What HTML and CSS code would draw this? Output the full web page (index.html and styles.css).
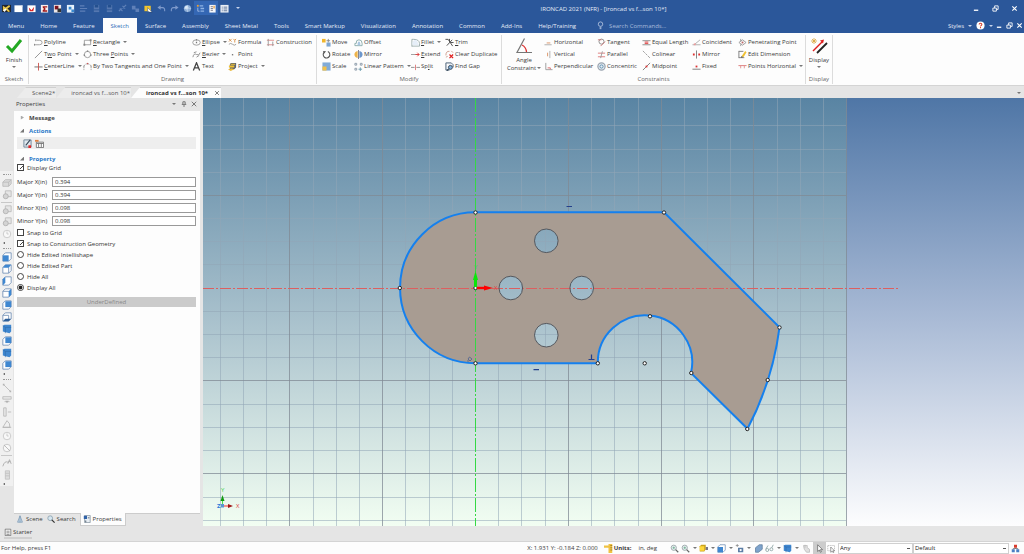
FILE: index.html
```html
<!DOCTYPE html>
<html lang="en">
<head>
<meta charset="utf-8">
<title>IRONCAD 2021 (NFR) - [ironcad vs f...son 10*]</title>
<link rel="stylesheet" href="styles.css">
</head>
<body>
<svg class="defs" aria-hidden="true">
  <defs>
    <symbol id="i-app" viewBox="0 0 10 10"><path d="M0 1h10v8H0z" fill="#20242c"/><path d="M1 2l3 2 4-3 1 2-3 2 3 3-2 1-3-3-3 2z" fill="#e8c64a"/><path d="M1 7l3-2 1 1-2 3z" fill="#fff"/></symbol>
    <symbol id="i-page" viewBox="0 0 10 10"><path d="M0.5 1.500h9v7.500h-9z" fill="#fff"/><path d="M7 1.500h2.500v2z" fill="#c8d4e8"/></symbol>
    <symbol id="i-pagered" viewBox="0 0 10 10"><path d="M0.5 1.500h9v7.500h-9z" fill="#fff"/><path d="M2 4l3 3 3-4-1 5H3z" fill="#d22"/></symbol>
    <symbol id="i-pagesum" viewBox="0 0 10 10"><path d="M1 1h8v8.500H1z" fill="#f6ecec"/><path d="M3 2.500h5v1.500H5l1.500 1.500L5 7h3v1.500H3V7l1.500-1.500L3 4z" fill="#a01818"/></symbol>
    <symbol id="i-pagedark" viewBox="0 0 10 10"><path d="M1 1h8v8.500H1z" fill="#eee6e6"/><path d="M2 2h4v4H2z" fill="#7c1420"/><path d="M5 5h4v4H5z" fill="#333"/></symbol>
    <symbol id="i-pageblue" viewBox="0 0 10 10"><path d="M1 1h8v8.500H1z" fill="#e8f2fc"/><path d="M3 3h3v3H3zM6 6h3v3H6z" fill="#3b8ad0"/></symbol>
    <symbol id="i-open" viewBox="0 0 10 10"><path d="M1 2h5M1 5h8M1 8h6" stroke="#5f80b8" stroke-width="1.300"/></symbol>
    <symbol id="i-save" viewBox="0 0 10 10"><path d="M2 1h6v8H2z" fill="#5577b0"/><path d="M3 1h4v3H3zM2 6h6v1H2z" fill="#24508f"/></symbol>
    <symbol id="i-link" viewBox="0 0 10 10"><path d="M1 8l3-3M5 5l4-4M2 5l3 3M5 2l3 3" stroke="#5f80b8" stroke-width="1.300" fill="none"/></symbol>
    <symbol id="i-puzzle" viewBox="0 0 10 10"><path d="M1 2h4v4H1zM5 5h4v4H5z" fill="#5f80b8"/></symbol>
    <symbol id="i-pick" viewBox="0 0 10 10"><path d="M0.500 2h7v6h-7z" fill="#f2c52e"/><path d="M4 4l5 5H6L4 8z" fill="#fff" stroke="#345" stroke-width=".5"/></symbol>
    <symbol id="i-undo" viewBox="0 0 10 10"><path d="M2 4h4q3 0 2.500 4" stroke="#7e9acb" stroke-width="1.200" fill="none"/><path d="M0.500 4L4 1.500v5z" fill="#7e9acb"/></symbol>
    <symbol id="i-redo" viewBox="0 0 10 10"><path d="M8 4H4q-3 0-2.500 4" stroke="#7e9acb" stroke-width="1.200" fill="none"/><path d="M9.500 4L6 1.500v5z" fill="#7e9acb"/></symbol>
    <symbol id="i-globe" viewBox="0 0 10 10"><circle cx="5" cy="5" r="4" fill="#8fb0d8"/><circle cx="4" cy="4" r="2" fill="#d9e8f6"/><path d="M5 1v8M1 5h8" stroke="#c6d8ee" stroke-width=".6"/></symbol>
    <symbol id="i-tree" viewBox="0 0 10 10"><path d="M1 1h2v2H1z" fill="#f0a030"/><path d="M4 2h4M5 5h4M5 8h4" stroke="#8fb4e4" stroke-width="1.400"/><path d="M2 4v4h2" stroke="#bcd0ee" fill="none" stroke-width=".8"/></symbol>
    <symbol id="i-prop" viewBox="0 0 10 10"><path d="M1.500 1h7v8.500h-7z" fill="#f4f6fa"/><path d="M3 3h2.500M3 5h2.500M3 7h2.500" stroke="#556" stroke-width=".8"/><path d="M6 2h1.500v3H6z" fill="#e8a040"/></symbol>
    <symbol id="i-list" viewBox="0 0 10 10"><path d="M.5 1h9v8.500h-9z" fill="#e9eef6"/><path d="M2 3.500h6M2 5.500h6M2 7.500h6" stroke="#33507c" stroke-width=".8" stroke-dasharray="1 1 4"/></symbol>

    <symbol id="i-polyline" viewBox="0 0 10 10"><path d="M1 7.500h5q3 0 3-2.500T6 2.500H3" stroke="#9a9a9a" fill="none"/><path d="M2 1.500v2M0.500 6.500v2" stroke="#777"/></symbol>
    <symbol id="i-line" viewBox="0 0 10 10"><path d="M1 9L9 1" stroke="#8c8c8c"/></symbol>
    <symbol id="i-center" viewBox="0 0 10 10"><path d="M0.500 5.500h9" stroke="#666"/><path d="M5 1v8.500" stroke="#c9504a"/></symbol>
    <symbol id="i-rect" viewBox="0 0 10 10"><path d="M1.500 2.500h7v5h-7z" stroke="#9a9a9a" fill="none"/><path d="M0.500 6.500h2v2h-2zM7.500 1.500h2v2h-2z" fill="#888"/></symbol>
    <symbol id="i-circle" viewBox="0 0 10 10"><circle cx="5" cy="5" r="3.500" stroke="#9a9a9a" fill="none"/><path d="M4.300.5h1.500V2H4.300zM.7 5h1.500v1.500H.7zM8 5h1.500v1.500H8z" fill="#777"/></symbol>
    <symbol id="i-tang" viewBox="0 0 10 10"><path d="M1 4v5M9 4v5M1 5q1-3 4-3t4 3" stroke="#999" fill="none" stroke-dasharray="3 1"/><path d="M4.300 1h1.500v1.500H4.300z" fill="#c55"/></symbol>
    <symbol id="i-ellipse" viewBox="0 0 10 10"><ellipse cx="5" cy="5" rx="4.200" ry="3" stroke="#999" fill="none"/><path d="M4.300 4.300h1.400v1.400H4.300zM4.300 1.300h1.400v1.400H4.300z" fill="#777"/></symbol>
    <symbol id="i-bezier" viewBox="0 0 10 10"><path d="M1 8q1-5 4-3t4-2M2 3l3-1M5 8l3-2" stroke="#888" fill="none"/></symbol>
    <symbol id="i-text" viewBox="0 0 10 10"><path d="M1.500 9.500L5 .8l3.500 8.700M2.800 6.500h4.400" stroke="#444" stroke-width="1.400" fill="none"/></symbol>
    <symbol id="i-formula" viewBox="0 0 10 10"><path d="M1 1l3 3M4 1L1 4M6 1l1.500 1.500V5M9 1L7.500 2.500" stroke="#d8924a" fill="none"/><path d="M1 7q2-2 4 0t4 0" stroke="#999" fill="none"/></symbol>
    <symbol id="i-point" viewBox="0 0 10 10"><path d="M4.300 4.500h1.500V6H4.300z" fill="#777"/></symbol>
    <symbol id="i-project" viewBox="0 0 10 10"><path d="M3 1h6v5L7 8H2V3z" fill="#5a6270"/><path d="M1 4h6v2H1zM3 2h5v1H3z" fill="#f1c232"/><path d="M0 8l4-1 3 1-4 2z" fill="#e8b93c"/></symbol>
    <symbol id="i-constr" viewBox="0 0 10 10"><path d="M1 2.500h8M1 7.500h8" stroke="#d88"/><path d="M2.500 1v8M7.500 4v5" stroke="#999"/></symbol>

    <symbol id="i-move" viewBox="0 0 10 10"><path d="M0 1h4v4H0z" fill="#f1b62c"/><path d="M5 3h4M7 1v4" stroke="#888"/><path d="M5 5h4.500v4.500H5z" fill="#7fa6d2"/></symbol>
    <symbol id="i-rotate" viewBox="0 0 10 10"><path d="M6.500 1.800A3.700 3.700 0 1 1 2.500 2.500" stroke="#555" stroke-width="1.200" fill="none"/><path d="M1 1l3.500.5L2.500 4z" fill="#555"/></symbol>
    <symbol id="i-scale" viewBox="0 0 10 10"><path d="M.5.5h9v9h-9z" fill="#82acd8"/><path d="M.5 5h4.500v4.500H.5z" fill="#f2c14a"/></symbol>
    <symbol id="i-offset" viewBox="0 0 10 10"><path d="M1 8.500h8V6Q9 2 5.500 2T2.500 6H1z" stroke="#8aa" fill="none"/><path d="M4 8V6q.2-2 1.500-2T7 6v2z" fill="#a9c6e2"/></symbol>
    <symbol id="i-mirror" viewBox="0 0 10 10"><path d="M4 1v8Q.5 8 .5 5T4 1z" fill="#eeb44a"/><path d="M6 1v8q3.500-1 3.500-4T6 1z" fill="#6d97cc"/><path d="M5 0v10" stroke="#556" stroke-width=".8"/></symbol>
    <symbol id="i-pattern" viewBox="0 0 10 10"><path d="M1 1.500h2v2H1zM7 1.500h2v2H7zM1 7h2v2H1z" fill="none" stroke="#8a98a8"/><path d="M5 8h4M7 6v4" stroke="#69a"/></symbol>
    <symbol id="i-fillet" viewBox="0 0 10 10"><path d="M1 9.500V1.500M1 9h8.500V6Q9 1.500 3 1.500H1" stroke="#9aa" fill="none"/><path d="M1.500 6Q2 2 6 2l3 6H2z" fill="#e6eef8"/></symbol>
    <symbol id="i-extend" viewBox="0 0 10 10"><path d="M0 5h6" stroke="#999"/><path d="M5 5h4M7 3l2 2-2 2" stroke="#d33" fill="none"/></symbol>
    <symbol id="i-split" viewBox="0 0 10 10"><path d="M0 6h4M6 6h4" stroke="#888"/><path d="M5 3v6" stroke="#d77"/></symbol>
    <symbol id="i-trim" viewBox="0 0 10 10"><path d="M.5 1.500h3L8.500 9M2 8.500L8 2M5 1v3M6 5h3.500" stroke="#444" fill="none"/></symbol>
    <symbol id="i-clear" viewBox="0 0 10 10"><path d="M1 6Q1 1 5 1.500M7 1l2 2M1 8l2-1" stroke="#c98" fill="none"/><path d="M5 5l4 4M9 5L5 9" stroke="#e02020" stroke-width="1.400"/></symbol>
    <symbol id="i-gap" viewBox="0 0 10 10"><path d="M1 1h6l2 2v3M1 1v8h4" fill="#eef3f8" stroke="#445a70"/><circle cx="6" cy="6" r="2.200" fill="#7fb0dc" stroke="#345"/><path d="M4 8L2 9.500" stroke="#345" stroke-width="1.400"/></symbol>

    <symbol id="i-horiz" viewBox="0 0 10 10"><path d="M.5 7.500h8" stroke="#aaa"/><path d="M3 5.500h4" stroke="#d99060"/></symbol>
    <symbol id="i-vert" viewBox="0 0 10 10"><path d="M6.500 1v8" stroke="#aaa"/><path d="M4 3v4" stroke="#d99060"/></symbol>
    <symbol id="i-perp" viewBox="0 0 10 10"><path d="M2 1v7.500h7.500" stroke="#999" fill="none"/><path d="M4 6.500h3V8" stroke="#d66" fill="none"/></symbol>
    <symbol id="i-tangent" viewBox="0 0 10 10"><circle cx="5" cy="4" r="2.800" stroke="#888" fill="none"/><path d="M1 2h4M4 9l5-5" stroke="#c77"/></symbol>
    <symbol id="i-parallel" viewBox="0 0 10 10"><path d="M1 3.500h8M1 7.500h8" stroke="#d77"/><path d="M6 1.500L4 9" stroke="#999"/></symbol>
    <symbol id="i-conc" viewBox="0 0 10 10"><circle cx="5" cy="5" r="4" stroke="#9aa4b0" stroke-width="1.400" fill="#e8eef4"/><circle cx="5" cy="5" r="1.800" stroke="#58a" fill="none"/></symbol>
    <symbol id="i-equal" viewBox="0 0 10 10"><path d="M.5 3h9M.5 7.500h9" stroke="#888"/><path d="M3 4.500h4M3 6h4" stroke="#d33"/></symbol>
    <symbol id="i-colin" viewBox="0 0 10 10"><path d="M1 1l8 8" stroke="#999" stroke-dasharray="3 1"/></symbol>
    <symbol id="i-mid" viewBox="0 0 10 10"><path d="M1 9L9 1" stroke="#777"/><path d="M4 4h2v2H4z" fill="#d33"/></symbol>
    <symbol id="i-coin" viewBox="0 0 10 10"><path d="M.5 7.500h9M3 7L9 2" stroke="#aaa"/><path d="M2 6h2v2H2z" fill="#e99"/></symbol>
    <symbol id="i-cmirror" viewBox="0 0 10 10"><path d="M5 .5v9" stroke="#777"/><path d="M1 4h2v2H1zM7 4h2v2H7z" fill="#d33"/></symbol>
    <symbol id="i-fixed" viewBox="0 0 10 10"><path d="M.5 8h9" stroke="#777"/><path d="M4 4h2v2H4z" fill="#d33"/></symbol>
    <symbol id="i-pen" viewBox="0 0 10 10"><path d="M1 5l4-3 4 3-4 3zM3 1v3M3 7v2" stroke="#999" fill="none"/><path d="M4 4h2v2H4z" fill="#b66"/></symbol>
    <symbol id="i-edit" viewBox="0 0 10 10"><path d="M1 1v8M1 8.500h6M1 1.500h5" stroke="#777" fill="none"/><path d="M4 7L8 1l1.500 1.500L6 8z" fill="#f0c030"/><path d="M3.500 8.500L4 6.500 5.500 8z" fill="#444"/></symbol>
    <symbol id="i-ph" viewBox="0 0 10 10"><path d="M.5 4h9" stroke="#d77"/><path d="M3 4v3M7 4v3" stroke="#e09090"/></symbol>

    <symbol id="i-cfront" viewBox="0 0 12 12"><path d="M1 4l3-3h7v7l-3 3H1z" fill="#fff" stroke="#6d8db4"/><path d="M1 4h7v7H1z" fill="#3f87d0"/></symbol>
    <symbol id="i-ctop" viewBox="0 0 12 12"><path d="M1 4l3-3h7v7l-3 3H1zM8 4v7" fill="#fff" stroke="#6d8db4"/><path d="M1 4.500l3-3.500h7L8 4.500z" fill="#3f87d0"/></symbol>
    <symbol id="i-cleft" viewBox="0 0 12 12"><path d="M1 4l3-3h7v7l-3 3H1z" fill="#fff" stroke="#6d8db4"/><path d="M1 4l3-3v7l-3 3z" fill="#3f87d0"/></symbol>
    <symbol id="i-cright" viewBox="0 0 12 12"><path d="M1 4l3-3h7v7l-3 3H1zM1 4h7" fill="#fff" stroke="#6d8db4"/><path d="M8 4l3-3v7l-3 3z" fill="#3f87d0"/></symbol>
    <symbol id="i-cback" viewBox="0 0 12 12"><path d="M1 4l3-3h7v7l-3 3H1z" fill="#fff" stroke="#6d8db4"/><path d="M4 1.500h7v7H4z" fill="#3f87d0"/></symbol>
    <symbol id="i-cbottom" viewBox="0 0 12 12"><path d="M1 4l3-3h7v7l-3 3H1zM1 4h7V9" fill="#fff" stroke="#6d8db4"/><path d="M1 11l3-3h7l-3 3z" fill="#2d5f99"/></symbol>
    <symbol id="i-cfull" viewBox="0 0 12 12"><path d="M1 2l2-1h8v8l-2 2-8-2z" fill="#3f87d0"/><path d="M1 2l3 2h7M4 4v7" stroke="#2f69a8" fill="none" stroke-width=".8"/></symbol>

    <symbol id="g-solid" viewBox="0 0 12 12"><path d="M1 5l3-3h7v5l-3 3H1zM1 5h7v5M8 5l3-3" fill="#dadada" stroke="#b9b9b9"/></symbol>
    <symbol id="g-bool" viewBox="0 0 12 12"><path d="M4 1h7v7H4z" fill="#e6e6e6" stroke="#b9b9b9"/><circle cx="4.500" cy="7.500" r="3" fill="#d4d4d4" stroke="#b0b0b0"/></symbol>
    <symbol id="g-ring" viewBox="0 0 12 12"><circle cx="6" cy="6" r="4.500" fill="#f8f8f8" stroke="#c4c4c4"/><path d="M6 3v3h2" stroke="#c4c4c4" fill="none"/></symbol>
    <symbol id="g-no" viewBox="0 0 12 12"><circle cx="6" cy="6" r="4.500" fill="#f8f8f8" stroke="#c0c0c0"/><path d="M2.500 2.500l7 7" stroke="#b0b0b0"/></symbol>
    <symbol id="g-line" viewBox="0 0 12 12"><path d="M2 2l8 8" stroke="#b4b4b4"/><path d="M1 1h2v2H1zM9 9h2v2H9z" fill="#b4b4b4"/></symbol>
    <symbol id="g-hdim" viewBox="0 0 12 12"><path d="M1 2h10v3H1zM3 8h6" fill="#e8e8e8" stroke="#b8b8b8"/><path d="M4 7h4L6 10z" fill="#b0b0b0"/></symbol>
    <symbol id="g-vdim" viewBox="0 0 12 12"><path d="M2 1h3v10H2zM7 6h4" fill="#e8e8e8" stroke="#b8b8b8"/></symbol>
    <symbol id="g-ang" viewBox="0 0 12 12"><path d="M1 10L6 2q4 3 3.500 8zM1 10h10" fill="none" stroke="#b4b4b4"/></symbol>
    <symbol id="g-spl" viewBox="0 0 12 12"><path d="M1 10Q3 3 7 5l3-1M7 7l2-5 2 5" fill="none" stroke="#a8a8a8"/></symbol>
    <symbol id="g-bar" viewBox="0 0 12 12"><path d="M4 1h5v10H4zM4 4h5M4 7h5" fill="#ddd" stroke="#c0c0c0"/></symbol>

    <symbol id="s-zoom" viewBox="0 0 12 12"><circle cx="5" cy="5" r="3.500" fill="#e6eef0" stroke="#8c9a9c"/><path d="M3.500 5h3M5 3.500v3" stroke="#6a8"/><path d="M7.500 7.500L11 11" stroke="#666" stroke-width="1.600"/></symbol>
    <symbol id="s-yel" viewBox="0 0 12 12"><path d="M1 3l2-2h6v6L7 10H1z" fill="#caa21c"/><path d="M1 3h6v6H1z" fill="#ffd83a"/><path d="M9 4h3v4H9z" fill="#778"/></symbol>
    <symbol id="s-cam" viewBox="0 0 12 12"><path d="M4 5h7v6H4z" fill="#5c7ea6"/><path d="M1 2h4M3 0v4" stroke="#888"/><circle cx="7.500" cy="8" r="1.500" fill="#fff"/></symbol>
    <symbol id="s-plane" viewBox="0 0 12 12"><path d="M2 5l5-4h4v6l-5 4H2z" fill="#7ea3cc" stroke="#5f7d9e"/></symbol>
    <symbol id="s-glass" viewBox="0 0 12 12"><circle cx="3" cy="8" r="2" fill="none" stroke="#7f9a9a"/><circle cx="8.500" cy="7" r="2" fill="none" stroke="#7f9a9a"/><path d="M1 7l3-5M9 5l2-4" stroke="#7f9a9a"/></symbol>
    <symbol id="s-hand" viewBox="0 0 12 12"><path d="M2 2h5v3l3 2v4H6L3 7zM4 1v4" fill="#e0e0e0" stroke="#b8b8b8"/></symbol>
    <symbol id="s-arrow" viewBox="0 0 12 12"><path d="M3.500 1v9l2.200-2 1.500 3 1.300-.6L7.200 7.500H10z" fill="#fff" stroke="#555" stroke-width=".9"/></symbol>
    <symbol id="s-box" viewBox="0 0 12 12"><path d="M1 2h9v7H1z" fill="none" stroke="#aaa" stroke-dasharray="1.500 1"/><path d="M5 4v7l2-1.500 1 2 1-.5-1-2h2z" fill="#fff" stroke="#666" stroke-width=".8"/></symbol>
    <symbol id="s-org" viewBox="0 0 12 12"><path d="M4 1h4v4H4z" fill="#d93a2c"/><path d="M1 7h4v4H1zM7 7h4v4H7z" fill="#4a7fc4"/><path d="M6 5v1M3 7V6h6v1" stroke="#666" fill="none"/></symbol>
    <symbol id="s-rule" viewBox="0 0 12 12"><path d="M6 0h5v12H6zM0 2h6v3H0z" fill="#f0c243"/><path d="M8.500 2H11M8.500 5H11M8.500 8H11" stroke="#7a5c10" stroke-width=".8"/></symbol>

    <symbol id="w-min" viewBox="0 0 8 8"><path d="M1 6h5" stroke="#fff" stroke-width="1.500"/></symbol>
    <symbol id="w-res" viewBox="0 0 8 8"><path d="M1 3.500h4v3.500H1zM3 3.500V1h4v4H5" stroke="#fff" fill="none"/></symbol>
    <symbol id="w-x" viewBox="0 0 8 8"><path d="M1.500 1.500l5 5M6.500 1.500l-5 5" stroke="#fff" stroke-width="1.300"/></symbol>
  </defs>
</svg>

<div class="app">
  <header class="titlebar">
    <div class="qat">
      <button aria-label="Application"><svg><use href="#i-app"/></svg></button>
      <button aria-label="New"><svg><use href="#i-page"/></svg></button>
      <button aria-label="New scene"><svg><use href="#i-pagered"/></svg></button>
      <button aria-label="New drawing"><svg><use href="#i-pagesum"/></svg></button>
      <button aria-label="Templates"><svg><use href="#i-pagedark"/></svg></button>
      <button aria-label="Import"><svg><use href="#i-pageblue"/></svg></button>
      <button aria-label="Open"><svg><use href="#i-open"/></svg></button>
      <button aria-label="Save"><svg><use href="#i-save"/></svg></button>
      <button aria-label="Save as"><svg><use href="#i-save"/></svg></button>
      <button aria-label="Link"><svg><use href="#i-link"/></svg></button>
      <button aria-label="Insert part"><svg><use href="#i-puzzle"/></svg></button>
      <button aria-label="Select"><svg><use href="#i-pick"/></svg></button>
      <button aria-label="Undo"><svg><use href="#i-undo"/></svg></button>
      <button aria-label="Redo"><svg><use href="#i-redo"/></svg></button>
      <button aria-label="Web"><svg><use href="#i-globe"/></svg></button>
      <button class="on" aria-label="Scene tree"><svg><use href="#i-tree"/></svg></button>
      <button class="on" aria-label="Property panel"><svg><use href="#i-prop"/></svg></button>
      <button aria-label="List"><svg><use href="#i-list"/></svg></button>
      <button class="caret light" aria-label="Customize toolbar"></button>
    </div>
    <h1>IRONCAD 2021 (NFR) - [ironcad vs f...son 10*]</h1>
    <div class="winctl">
      <button aria-label="Minimize"><svg><use href="#w-min"/></svg></button>
      <button aria-label="Restore"><svg><use href="#w-res"/></svg></button>
      <button aria-label="Close"><svg><use href="#w-x"/></svg></button>
    </div>
  </header>

  <nav class="menubar">
    <button>Menu</button><button>Home</button><button>Feature</button><button class="active">Sketch</button><button>Surface</button><button>Assembly</button><button>Sheet Metal</button><button>Tools</button><button>Smart Markup</button><button>Visualization</button><button>Annotation</button><button>Common</button><button>Add-Ins</button><button>Help/Training</button>
    <label class="search"><svg viewBox="0 0 8 10"><circle cx="4" cy="3.500" r="2.500" fill="none" stroke="#b9c8e2" stroke-width=".9"/><path d="M3 7h2M3 8.500h2" stroke="#b9c8e2"/></svg><input type="text" placeholder="Search Commands..." aria-label="Search Commands"></label>
    <div class="docctl">
      <button class="styles">Styles<i class="caret light"></i></button>
      <button class="help" aria-label="Help"><svg viewBox="0 0 10 10"><circle cx="5" cy="5" r="4.500" fill="#fff"/><path d="M3.500 3.800Q3.500 2.500 5 2.500t1.500 1.300Q6.500 4.600 5 5.500M5 6.500V8" stroke="#d8402c" stroke-width="1.200" fill="none"/></svg><i class="caret light"></i></button>
      <button aria-label="Minimize document"><svg><use href="#w-min"/></svg></button>
      <button aria-label="Restore document"><svg><use href="#w-res"/></svg></button>
      <button aria-label="Close document"><svg><use href="#w-x"/></svg></button>
    </div>
  </nav>

  <div class="ribbon">
    <section class="group">
      <div class="tools finish">
        <button class="big"><svg viewBox="0 0 18 18"><path d="M2 9l5 5L16 3" stroke="#22a822" stroke-width="3" fill="none"/></svg>Finish<i class="caret"></i></button>
      </div>
      <h2>Sketch</h2>
    </section>
    <section class="group">
      <div class="tools drawing">
        <div>
          <button><svg><use href="#i-polyline"/></svg><span><u>P</u>olyline</span></button>
          <button><svg><use href="#i-line"/></svg><span>T<u>w</u>o Point</span><i class="caret"></i></button>
          <button><svg><use href="#i-center"/></svg><span><u>C</u>enterLine</span><i class="caret"></i></button>
        </div>
        <div>
          <button><svg><use href="#i-rect"/></svg><span><u>R</u>ectangle</span><i class="caret"></i></button>
          <button><svg><use href="#i-circle"/></svg><span>Three <u>P</u>oints</span><i class="caret"></i></button>
          <button><svg><use href="#i-tang"/></svg><span>By Two Tangents and One Point</span><i class="caret"></i></button>
        </div>
        <div>
          <button><svg><use href="#i-ellipse"/></svg><span><u>E</u>llipse</span><i class="caret"></i></button>
          <button><svg><use href="#i-bezier"/></svg><span><u>B</u>ezier</span><i class="caret"></i></button>
          <button><svg><use href="#i-text"/></svg><span>Text</span></button>
        </div>
        <div>
          <button><svg><use href="#i-formula"/></svg><span>Formula</span></button>
          <button><svg><use href="#i-point"/></svg><span>Point</span></button>
          <button><svg><use href="#i-project"/></svg><span>Project</span><i class="caret"></i></button>
        </div>
        <div>
          <button><svg><use href="#i-constr"/></svg><span>Construction</span></button>
        </div>
      </div>
      <h2>Drawing</h2>
    </section>
    <section class="group">
      <div class="tools modify">
        <div>
          <button><svg><use href="#i-move"/></svg><span>Move</span></button>
          <button><svg><use href="#i-rotate"/></svg><span>Rotate</span></button>
          <button><svg><use href="#i-scale"/></svg><span>Scale</span></button>
        </div>
        <div>
          <button><svg><use href="#i-offset"/></svg><span>Offset</span></button>
          <button><svg><use href="#i-mirror"/></svg><span>Mirror</span></button>
          <button><svg><use href="#i-pattern"/></svg><span>Linear Pattern</span><i class="caret"></i></button>
        </div>
        <div>
          <button><svg><use href="#i-fillet"/></svg><span><u>F</u>illet</span><i class="caret"></i></button>
          <button><svg><use href="#i-extend"/></svg><span><u>E</u>xtend</span></button>
          <button><svg><use href="#i-split"/></svg><span>Sp<u>l</u>it</span></button>
        </div>
        <div>
          <button><svg><use href="#i-trim"/></svg><span><u>T</u>rim</span></button>
          <button><svg><use href="#i-clear"/></svg><span>Clear Duplicate</span></button>
          <button><svg><use href="#i-gap"/></svg><span>Find Gap</span></button>
        </div>
      </div>
      <h2>Modify</h2>
    </section>
    <section class="group">
      <div class="tools constraints">
        <button class="big"><svg viewBox="0 0 18 18"><path d="M9.500 1.500L2 15.500h15" stroke="#777" stroke-width="1.200" fill="none"/><path d="M7 8q4 2 4.500 7" stroke="#d33" stroke-width="1.300" fill="none"/></svg>Angle<span>Constraint<i class="caret"></i></span></button>
        <div>
          <button><svg><use href="#i-horiz"/></svg><span>Horizontal</span></button>
          <button><svg><use href="#i-vert"/></svg><span>Vertical</span></button>
          <button><svg><use href="#i-perp"/></svg><span>Perpendicular</span></button>
        </div>
        <div>
          <button><svg><use href="#i-tangent"/></svg><span>Tangent</span></button>
          <button><svg><use href="#i-parallel"/></svg><span>Parallel</span></button>
          <button><svg><use href="#i-conc"/></svg><span>Concentric</span></button>
        </div>
        <div>
          <button><svg><use href="#i-equal"/></svg><span>Equal Length</span></button>
          <button><svg><use href="#i-colin"/></svg><span>Colinear</span></button>
          <button><svg><use href="#i-mid"/></svg><span>Midpoint</span></button>
        </div>
        <div>
          <button><svg><use href="#i-coin"/></svg><span>Coincident</span></button>
          <button><svg><use href="#i-cmirror"/></svg><span>Mirror</span></button>
          <button><svg><use href="#i-fixed"/></svg><span>Fixed</span></button>
        </div>
        <div>
          <button><svg><use href="#i-pen"/></svg><span>Penetrating Point</span></button>
          <button><svg><use href="#i-edit"/></svg><span>Edit Dimension</span></button>
          <button><svg><use href="#i-ph"/></svg><span>Points Horizontal</span><i class="caret"></i></button>
        </div>
      </div>
      <h2>Constraints</h2>
    </section>
    <section class="group">
      <div class="tools display">
        <button class="big"><svg viewBox="0 0 18 18"><path d="M3 14L12 5" stroke="#e02020" stroke-width="1.500"/><path d="M14 2.500l-4 1 3 3z" fill="#e02020"/><path d="M7 16L17 6" stroke="#222" stroke-width="1.800"/><path d="M4 1v6M1 4h6M2 2l4 4M6 2L2 6" stroke="#d9a43c" stroke-width=".8"/></svg>Display<i class="caret"></i></button>
      </div>
      <h2>Display</h2>
    </section>
  </div>

  <div class="doctabs" role="tablist">
    <button role="tab">Scene2*</button>
    <button role="tab">ironcad vs f...son 10*</button>
    <button role="tab" class="active" aria-selected="true">ironcad vs f...son 10*<svg viewBox="0 0 8 8"><path d="M1.500 1.500l5 5M6.500 1.500l-5 5" stroke="#555"/></svg></button>
    <button class="caret more" aria-label="Tab list"></button>
  </div>

  <main>
    <aside class="strip">
      <hr class="grip">
      <button aria-label="Solid"><svg><use href="#g-solid"/></svg></button>
      <button aria-label="Shell"><svg><use href="#g-bool"/></svg></button>
      <hr>
      <button aria-label="Union"><svg><use href="#g-bool"/></svg></button>
      <button aria-label="Subtract"><svg><use href="#g-bool"/></svg></button>
      <button aria-label="Intersect"><svg><use href="#g-ring"/></svg></button>
      <button class="more" aria-label="More solid tools"></button>
      <hr class="grip">
      <button aria-label="Front"><svg><use href="#i-cfront"/></svg></button>
      <button aria-label="Top"><svg><use href="#i-ctop"/></svg></button>
      <button aria-label="Left"><svg><use href="#i-cleft"/></svg></button>
      <button aria-label="Right"><svg><use href="#i-cright"/></svg></button>
      <button aria-label="Back"><svg><use href="#i-cback"/></svg></button>
      <button aria-label="Bottom"><svg><use href="#i-cbottom"/></svg></button>
      <button aria-label="Isometric 1"><svg><use href="#i-cfull"/></svg></button>
      <button aria-label="Isometric 2"><svg><use href="#i-cback"/></svg></button>
      <button aria-label="Isometric 3"><svg><use href="#i-cfull"/></svg></button>
      <button aria-label="Isometric 4"><svg><use href="#i-cback"/></svg></button>
      <button class="more" aria-label="More views"></button>
      <hr class="grip">
      <button aria-label="Smart dimension"><svg><use href="#g-line"/></svg></button>
      <button aria-label="Horizontal dimension"><svg><use href="#g-hdim"/></svg></button>
      <button aria-label="Vertical dimension"><svg><use href="#g-vdim"/></svg></button>
      <button aria-label="Angle dimension"><svg><use href="#g-ang"/></svg></button>
      <button aria-label="Radius dimension"><svg><use href="#g-ring"/></svg></button>
      <button aria-label="Diameter dimension"><svg><use href="#g-no"/></svg></button>
      <hr>
      <button aria-label="Leader"><svg><use href="#g-spl"/></svg></button>
      <button aria-label="Symbol"><svg><use href="#g-bar"/></svg></button>
      <button class="more" aria-label="More dimensions"></button>
    </aside>

    <div class="dock">
      <div class="dockhead"><span>Properties</span>
        <button class="caret" aria-label="Panel menu"></button>
        <button aria-label="Pin"><svg viewBox="0 0 8 8"><path d="M2.500 1h3v3.500M2.500 1v3.500M1 4.500h6M4 5v3" stroke="#555" fill="none"/></svg></button>
        <button aria-label="Close panel"><svg viewBox="0 0 8 8"><path d="M1 1l6 6M7 1L1 7" stroke="#555"/></svg></button>
      </div>
      <form class="panel">
        <h3 class="closed">Message</h3>
        <h3>Actions</h3>
        <div class="actions">
          <button type="button" aria-label="Edit sketch"><svg viewBox="0 0 10 10"><path d="M1 1h8v8H1z" fill="#dfe8ee" stroke="#6d8296"/><path d="M3 7L8 1" stroke="#345" stroke-width="1.200"/><path d="M6 7h3v3H6z" fill="#e02828"/></svg></button>
          <button type="button" aria-label="Sketch options"><svg viewBox="0 0 10 10"><path d="M1.500 3.500h8v6h-8zM4 5v4M7 5v4M2 5h7" stroke="#666" fill="#fff" stroke-width=".9"/><path d="M0 1h4v2H0z" fill="#e08040"/></svg></button>
        </div>
        <h3>Property</h3>
        <label class="opt"><input type="checkbox" checked>Display Grid</label>
        <div class="fields">
          <label for="majx">Major X(in)</label><input id="majx" type="text" value="0.394">
          <label for="majy">Major Y(in)</label><input id="majy" type="text" value="0.394">
          <label for="minx">Minor X(in)</label><input id="minx" type="text" value="0.098">
          <label for="miny">Minor Y(in)</label><input id="miny" type="text" value="0.098">
        </div>
        <label class="opt"><input type="checkbox">Snap to Grid</label>
        <label class="opt"><input type="checkbox" checked>Snap to Construction Geometry</label>
        <label class="opt"><input type="radio" name="vis">Hide Edited Intellishape</label>
        <label class="opt"><input type="radio" name="vis">Hide Edited Part</label>
        <label class="opt"><input type="radio" name="vis">Hide All</label>
        <label class="opt"><input type="radio" name="vis" checked>Display All</label>
        <button type="button" class="state" disabled>UnderDefined</button>
      </form>
      <div class="docktabs" role="tablist">
        <button role="tab"><svg viewBox="0 0 10 10"><path d="M5 1L2 9h6zM5 1v8" stroke="#7f9cb8" fill="#c8dae8"/></svg>Scene</button>
        <button role="tab"><svg viewBox="0 0 10 10"><circle cx="4" cy="4" r="3" fill="#d5e6f0" stroke="#8aa0ac"/><path d="M6 6l3.500 3.500" stroke="#333" stroke-width="1.500"/></svg>Search</button>
        <button role="tab" class="active"><svg viewBox="0 0 10 10"><path d="M2 .5h7v9H2z" fill="#e8eef4" stroke="#8895a2"/><path d="M1 1h4v4H1z" fill="#2f62a8"/><path d="M3 7h1v2H3zM6 3h2v1H6z" fill="#345"/></svg>Properties</button>
      </div>
    </div>

    <svg class="viewport" viewBox="203 98 821 428" preserveAspectRatio="xMinYMin slice" role="img" aria-label="Sketch of bracket profile">
      <defs>
        <linearGradient id="sky" x1="0" y1="0" x2="0" y2="1"><stop offset="0" stop-color="#4f76a6"/><stop offset=".5" stop-color="#a6b8d4"/><stop offset="1" stop-color="#fdfdfe"/></linearGradient>
        <linearGradient id="plane" x1="0" y1="0" x2="0" y2="1"><stop offset="0" stop-color="#5984a3"/><stop offset=".5" stop-color="#a6bfcb"/><stop offset="1" stop-color="#f2fef2"/></linearGradient>
      </defs>
      <path d="M203 98h821v428H203z" fill="url(#sky)"/>
      <path d="M203 98h643.500v428H203z" fill="url(#plane)"/>
      <path class="minor" d="M220.500 98v428M243.500 98v428M266.500 98v428M313.500 98v428M336.500 98v428M359.500 98v428M405.500 98v428M429.500 98v428M452.500 98v428M498.500 98v428M521.500 98v428M545.500 98v428M591.500 98v428M614.500 98v428M638.500 98v428M684.500 98v428M707.500 98v428M730.500 98v428M777.500 98v428M800.500 98v428M823.500 98v428M203 125.500h643M203 149.500h643M203 172.500h643M203 218.500h643M203 241.500h643M203 264.500h643M203 311.500h643M203 334.500h643M203 357.500h643M203 404.500h643M203 427.500h643M203 450.500h643M203 497.500h643M203 520.500h643"/>
      <path class="major" d="M289.500 98v428M382.500 98v428M568.500 98v428M661.500 98v428M753.500 98v428M846.500 98v428M203 195.500h643M203 380.500h643M203 473.500h643"/>
      <path class="part" fill-rule="evenodd" d="M475.500 212.300H664L779.500 327.300A300 300 0 0 1 747.500 428.800L691 373A47.200 47.200 0 1 0 597.800 363.300H475.500A75.500 75.500 0 0 1 475.500 212.300zM534.500 240.800a11.800 11.800 0 1 0 23.600 0a11.800 11.800 0 1 0-23.600 0zM534.500 335.200a11.800 11.800 0 1 0 23.600 0a11.800 11.800 0 1 0-23.600 0zM499 288a11.800 11.800 0 1 0 23.600 0a11.800 11.800 0 1 0-23.600 0zM569.900 288a11.800 11.800 0 1 0 23.600 0a11.800 11.800 0 1 0-23.600 0z"/>
      <path class="axis-y" d="M475.500 98v428"/>
      <path class="axis-x" d="M203 288.500h697"/>
      <g class="hole"><circle cx="546.300" cy="240.800" r="11.800"/><circle cx="546.300" cy="335.200" r="11.800"/><circle cx="510.800" cy="288" r="11.800"/><circle cx="581.700" cy="288" r="11.800"/></g>
      <path class="edge" d="M475.500 212.300H664L779.500 327.300A300 300 0 0 1 747.500 428.800L691 373A47.200 47.200 0 1 0 597.800 363.300H475.500A75.500 75.500 0 0 1 475.500 212.300z"/>
      <g class="node"><circle cx="475.500" cy="212.500" r="1.700"/><circle cx="664" cy="212.500" r="1.700"/><circle cx="779.500" cy="327.500" r="1.700"/><circle cx="767.700" cy="380" r="1.700"/><circle cx="747.300" cy="429" r="1.700"/><circle cx="691.300" cy="373" r="1.700"/><circle cx="650" cy="316.300" r="1.700"/><circle cx="644.700" cy="363.300" r="1.700"/><circle cx="597.800" cy="363.300" r="1.700"/><circle cx="475.500" cy="363.300" r="1.700"/><circle cx="399.800" cy="288" r="1.700"/><circle cx="475.500" cy="288" r="1.700"/></g>
      <path d="M475.500 287V279" stroke="#0be60b" stroke-width="3"/><path d="M475.500 271l-2.500 9h5z" fill="#0be60b"/>
      <path d="M477 288h8" stroke="#f00" stroke-width="2.400"/><path d="M493 288l-9-2.500v5z" fill="#f00"/>
      <text x="494" y="290" class="lbl red">X</text><text x="474" y="269" class="lbl green">Y</text>
      <path d="M566.500 206.500h5.500M533.500 369.700h5.500M588.500 359.500h6M591.500 359.500v-5" stroke="#24408c" stroke-width="1.200"/>
      <path d="M469.500 357l2.500 2-2 2-2-2zM467 361h2" stroke="#4a5f90" fill="none" stroke-width=".8"/>
      <path d="M222.500 505v-5" stroke="#4be04b"/><path d="M222.500 495l-2 6h4z" fill="#109a10"/><path d="M224 506h5" stroke="#f07070" stroke-width="1.500"/><path d="M233 506l-5-2v4z" fill="#a01818"/><path d="M221 504h3v3.500h-3z" fill="#5a94d0"/>
      <text x="221" y="492" class="lbl green">Y</text><text x="236" y="508" class="lbl red">X</text><text x="217" y="508" class="lbl blue">Z</text>
    </svg>
  </main>

  <div class="starter"><button><svg viewBox="0 0 10 10"><path d="M1.500 1.500h7v8h-7zM3 4h4M3 6h4M3 8h4" fill="#fff" stroke="#555" stroke-width=".8"/></svg>Starter</button></div>

  <footer>
    <span class="hint">For Help, press F1</span>
    <span class="coords">X: 1.931 Y: -0.184 Z: 0.000</span>
    <svg><use href="#s-rule"/></svg><b>Units:</b><span class="units">in, deg</span>
    <div class="viewtools">
      <button aria-label="Zoom"><svg><use href="#s-zoom"/></svg></button>
      <button aria-label="Zoom window"><svg><use href="#s-zoom"/></svg><i class="caret"></i></button>
      <button aria-label="Look at"><svg><use href="#s-yel"/></svg><i class="caret"></i></button>
      <button aria-label="View direction"><svg><use href="#i-cfront"/></svg><i class="caret"></i></button>
      <button aria-label="Camera"><svg><use href="#s-cam"/></svg><i class="caret"></i></button>
      <button aria-label="Perspective"><svg><use href="#s-plane"/></svg></button>
      <button aria-label="Visibility"><svg><use href="#s-glass"/></svg><i class="caret"></i></button>
      <button aria-label="Render style"><svg><use href="#i-cfull"/></svg><i class="caret"></i></button>
      <button aria-label="Pan"><svg><use href="#s-hand"/></svg></button>
      <button class="on" aria-label="Select"><svg><use href="#s-arrow"/></svg></button>
      <button aria-label="Box select"><svg><use href="#s-box"/></svg></button>
    </div>
    <select aria-label="Selection filter"><option>Any</option></select><select class="wide" aria-label="Configuration"><option>Default</option></select>
    <button aria-label="Structure"><svg><use href="#s-org"/></svg></button>
  </footer>
</div>
</body>
</html>
```

FILE: styles.css
```css
* { box-sizing: border-box; }
body {
  margin: 0;
  font: 6px/8px "Open Sans", "Noto Sans", sans-serif;
  color: #3a3a3a;
  background: #e5e5e5;
}
button, input, select { font: inherit; color: inherit; margin: 0; padding: 0; border: 0; background: none; }
h1, h2, h3 { margin: 0; font-size: inherit; font-weight: 400; }
svg { display: block; width: 9px; height: 9px; flex: none; }
.defs { position: absolute; width: 0; height: 0; }
.app { display: flex; flex-direction: column; height: 100vh; min-height: 500px; }

.caret::after {
  content: "";
  display: block;
  border: solid transparent;
  border-width: 2px 2px 0;
  border-top-color: #777;
}
.caret.light::after { border-top-color: #c7d4ec; }

/* title bar */
.titlebar { display: flex; align-items: center; height: 16px; background: #2b579a; color: #e4ebf6; flex: none; }
.qat { display: flex; width: 240px; }
.qat button { width: 13px; height: 14px; display: grid; place-items: center; flex: none; }
.qat button.on { background: #3467b4; width: 12px; }
.qat button:first-child { width: 12px; }
.titlebar h1 { flex: 1; text-align: center; padding-top: 2px; }
.winctl { display: flex; width: 57px; }
.winctl button { flex: 1; display: grid; place-items: center; }
.winctl svg, .docctl svg { width: 7px; height: 7px; }

/* ribbon tabs */
.menubar { display: flex; height: 17px; padding-top: 2px; background: #2b579a; color: #e4ebf6; flex: none; }
.menubar > button { padding: 0 8px; }
.menubar > button.active { background: #fdfdfd; color: #2b6cb8; }
.search { display: flex; align-items: center; gap: 4px; margin-left: 12px; color: #a9bcdc; flex: 1; }
.search input { flex: 1; min-width: 0; height: 12px; outline: 0; }
.search input::placeholder { color: #a9bcdc; opacity: 1; }
.docctl { display: flex; align-items: center; }
.docctl button { display: flex; align-items: center; justify-content: center; gap: 4px; width: 10px; }
.docctl .styles { width: 28px; }
.docctl .help { width: 20px; }
.docctl .help svg { width: 9px; height: 9px; }

/* ribbon */
.ribbon { display: flex; height: 53px; background: #fdfdfd; border-bottom: 1px solid #d4d4d4; flex: none; }
.group { display: flex; flex-direction: column; border-right: 1px solid #dcdcdc; margin: 2px 0 1px; }
.group h2 { text-align: center; color: #666; padding-top: 1px; }
.tools { display: grid; height: 39px; padding-top: 1px; }
.tools div { display: flex; flex-direction: column; }
.tools div button { display: flex; align-items: center; gap: 1px; height: 12px; white-space: nowrap; }
.tools div .caret { margin-left: 2px; }
.tools.finish { grid-template-columns: 28px; }
.tools.drawing { grid-template-columns: 49px 109px 36px 38px 50px; padding-left: 5px; }
.tools.modify { grid-template-columns: 32px 57px 34px 56px; padding-left: 5px; }
.tools.constraints { grid-template-columns: 40px 53px 45px 50px 46px 67px; padding-left: 2px; }
.tools.display { grid-template-columns: 26px; }
.big { display: flex; flex-direction: column; align-items: center; }
.big svg { width: 18px; height: 18px; margin: 1px 0; }
.big > .caret { margin-top: 2px; }
.big span { display: flex; align-items: center; gap: 1px; }

/* document tabs */
.doctabs { display: flex; height: 12px; padding: 1px 3px 0 17px; align-items: stretch; flex: none; }
.doctabs button[role] { display: flex; align-items: center; background: #ececec; color: #555; border-top: 1px solid #cfcfcf; padding: 0 1px 0 15px; clip-path: polygon(9px 0, 100% 0, 100% 100%, 0 100%); }
.doctabs button.active[role] { background: #fdfdfd; font-weight: 700; color: #333; gap: 6px; }
.doctabs svg { width: 6px; height: 6px; }
.doctabs .more { margin-left: auto; display: flex; align-items: center; }

main { flex: 1; display: flex; min-height: 0; }

/* view toolbar */
.strip { width: 13px; flex: none; display: flex; flex-direction: column; margin: 73px 1px auto 0; background: #f0f0f0; }
.strip button { height: 12px; display: grid; place-items: center; }
.strip svg { width: 10px; height: 10px; }
.strip hr { margin: 1px; border: 0; border-top: 1px solid #c8c8c8; width: 11px; }
.strip .grip { margin: 3px 3px 2px; border-top: 1px dotted #999; width: 8px; }
.strip .more { height: 5px; justify-content: start; padding-left: 3px; }
.strip .more::after { content: ""; border: solid transparent; border-width: 1px 2px 1px 0; border-right-color: #444; }

/* property panel */
.dock { width: 186px; flex: none; display: flex; flex-direction: column; margin-right: 3px; }
.dockhead { display: flex; align-items: center; height: 13px; padding: 0 3px 1px 2px; gap: 4px; }
.dockhead span { flex: 1; }
.dockhead button { width: 6px; display: grid; place-items: center; }
.dockhead svg { width: 6px; height: 6px; }
.panel { flex: 1; background: #fdfdfd; border-bottom: 1px solid #ccc; padding: 0 4px 0 3px; color: #333; min-height: 0; }
.panel h3 { display: flex; align-items: center; gap: 5px; font-weight: 700; height: 13px; padding-left: 3px; color: #2878c8; }
.panel h3::before { content: ""; width: 4px; height: 4px; background: #777; clip-path: polygon(100% 0, 100% 100%, 0 100%); }
.panel h3.closed { color: #444; }
.panel h3.closed::before { clip-path: polygon(20% 0, 100% 50%, 20% 100%); background: #aaa; }
.actions { display: flex; gap: 3px; align-items: center; height: 12px; padding-left: 6px; background: #eee; margin-bottom: 3px; }
.opt { display: flex; align-items: center; gap: 3px; height: 11px; }
h3 + .opt { margin-top: -3px; }
.opt input { appearance: none; width: 7px; height: 7px; border: 1px solid #444; background: #fff; flex: none; }
.opt input[type=radio] { border-radius: 50%; }
.opt input[type=radio]:checked { background: radial-gradient(circle, #222 50%, #fff 60%); }
.opt input[type=checkbox]:checked { background: linear-gradient(135deg, transparent 46%, #444 46% 60%, transparent 60%) 2px 0 / 3px 5px no-repeat, #fff; }
.fields { display: grid; grid-template-columns: 33px 1fr; gap: 3px 2px; align-items: center; padding: 4px 0 1px; }
.fields label { white-space: nowrap; }
.fields input { height: 10px; width: 100%; min-width: 0; border: 1px solid #999; background: #fff; padding: 0 2px; }
.state { display: block; width: 100%; height: 10px; margin-top: 4px; background: #cbcbcb; color: #888; }
.docktabs { display: flex; height: 12px; padding-left: 2px; }
.docktabs button { display: flex; align-items: center; gap: 2px; padding: 0 4px 2px 0; }
.docktabs svg { width: 8px; height: 8px; }
.docktabs .active { background: #fdfdfd; padding: 0 3px 1px 2px; border: 1px solid #ccc; border-top: 0; margin-top: -1px; }

/* drawing area */
.viewport { flex: 1; width: auto; height: auto; min-width: 0; }
.minor, .major, .axis-x, .axis-y, .edge, .hole { fill: none; }
.minor { stroke: #91a5b7; stroke-opacity: .55; }
.major { stroke: #808a94; stroke-opacity: .75; }
.axis-x { stroke: #dc5f5f; stroke-dasharray: 11 2 2 2; }
.axis-y { stroke: #35d845; stroke-dasharray: 14 2 2 2; }
.part { fill: #a89c92; }
.hole { stroke: #55585e; }
.edge { stroke: #1580ee; stroke-width: 2; }
.node { fill: #fff; stroke: #222; }
.lbl { font: 6px "Open Sans", sans-serif; }
.red { fill: #e04444; }
.green { fill: #3fd04a; }
.blue { fill: #2a78d8; font-weight: 700; }

.starter { height: 15px; padding: 1px 4px 2px; flex: none; }
.starter button { display: flex; align-items: center; gap: 1px; height: 12px; border-bottom: 2px solid #d0d0d0; }
.starter svg { width: 8px; height: 8px; }

/* status bar */
footer { display: flex; align-items: center; height: 13px; background: #fdfdfd; border-top: 1px solid #d4d4d4; padding: 0 4px 0 1px; flex: none; }
footer svg { width: 9px; height: 9px; }
.hint { flex: 1; }
.coords { margin-right: 6px; }
footer b { margin-left: 1px; font-weight: 700; }
.units { margin: 0 12px 0 7px; }
.viewtools { display: flex; align-items: center; }
.viewtools button { display: flex; align-items: center; justify-content: center; height: 12px; min-width: 12px; gap: 3px; padding-right: 2px; }
.viewtools .on { background: #ccc; padding-left: 2px; }
footer select { appearance: none; width: 75px; height: 11px; border: 1px solid #d0d0d0; padding-left: 1px; color: #222; background: linear-gradient(#555, #555) right 2px center / 3px 1px no-repeat #fff; }
footer select.wide { width: 96px; margin-right: 2px; }
```
